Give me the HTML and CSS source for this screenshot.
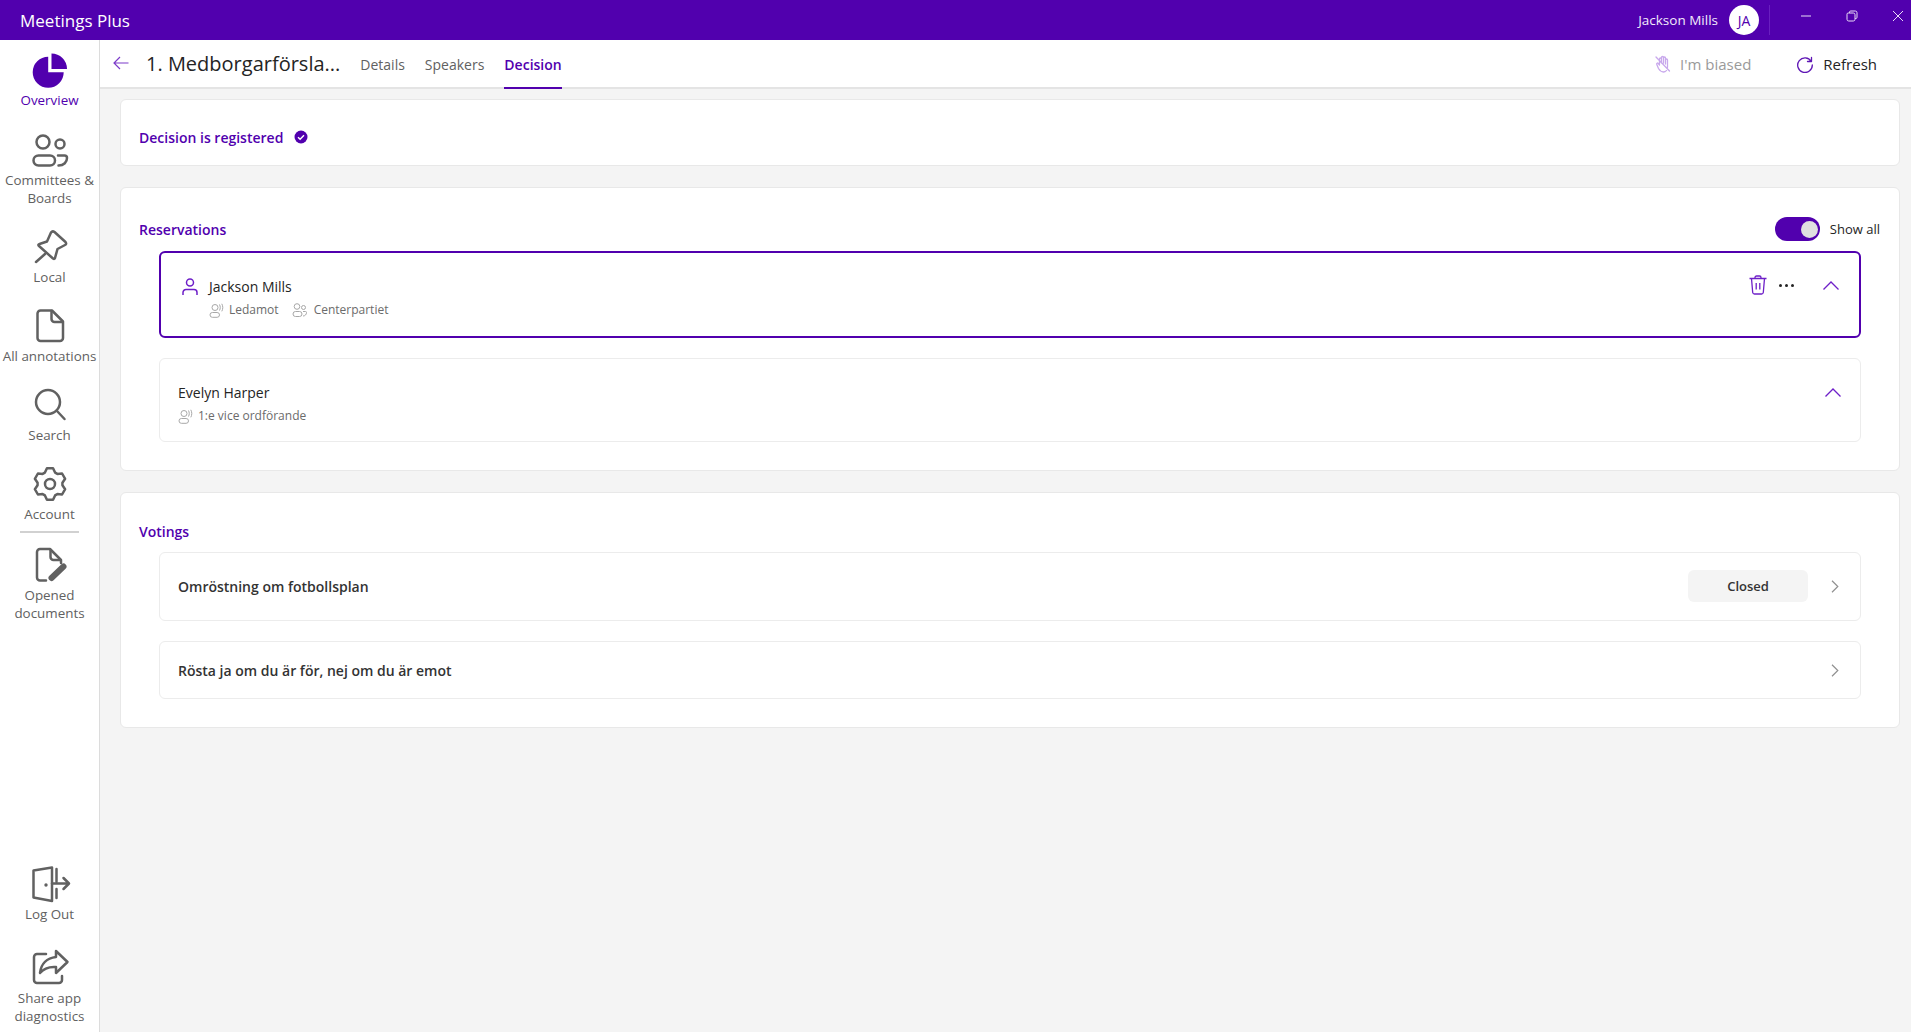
FILE: index.html
```html
<!DOCTYPE html>
<html lang="en">
<head>
<meta charset="utf-8">
<title>Meetings Plus</title>
<link rel="stylesheet" href="styles.css">
</head>
<body>
<div class="app">
  <header class="titlebar">
    <div class="app-name">Meetings Plus</div>
    <div class="title-right">
      <span class="user-name">Jackson Mills</span>
      <span class="avatar">JA</span>
      <span class="title-sep"></span>
      <div class="win-controls">
        <svg class="win-btn" width="12" height="12" viewBox="0 0 12 12"><path d="M1 6h10" class="win-line"/></svg>
        <svg class="win-btn" width="12" height="12" viewBox="0 0 12 12"><path d="M3.500 3V2.200A1.200 1.200 0 0 1 4.700 1h4.600A1.700 1.700 0 0 1 11 2.700v4.600A1.200 1.200 0 0 1 9.800 8.500H9M2.200 3h5.100A1.700 1.700 0 0 1 9 4.700v4.600A1.700 1.700 0 0 1 7.300 11H2.700A1.700 1.700 0 0 1 1 9.300V4.200A1.200 1.200 0 0 1 2.200 3Z" class="win-line"/></svg>
        <svg class="win-btn" width="12" height="12" viewBox="0 0 12 12"><path d="M1 1l10 10M11 1L1 11" class="win-line"/></svg>
      </div>
    </div>
  </header>
  <div class="body">
    <nav class="sidebar">
      <a class="nav-item nav-first active">
        <svg class="nav-icon" viewBox="0 0 36 36"><path class="fill-purple" d="M16.200 4.700V20.200H31.700A15.500 15.500 0 1 1 16.200 4.700Z"/><path class="fill-purple" d="M19.500 1.500A15.500 15.500 0 0 1 35 17H19.500Z"/></svg>
        <span>Overview</span>
      </a>
      <a class="nav-item">
        <svg class="nav-icon" viewBox="0 0 36 36"><circle class="st" cx="11" cy="10" r="6.500"/><circle class="st" cx="28" cy="12" r="4.500"/><rect class="st" x="1.500" y="23.500" width="21.500" height="10" rx="5"/><path class="st" d="M26 23.500h6.500A2.500 2.500 0 0 1 35 26c0 4-3 7.500-8.500 7.500"/></svg>
        <span>Committees &amp; Boards</span>
      </a>
      <a class="nav-item">
        <svg class="nav-icon" viewBox="0 0 36 36"><path class="st" d="M19 3.500Q20.500 1.500 22.500 3L33.500 13Q35 15 33 16L25.500 20 23 29Q22.500 30.500 21 29.500L7 17Q5.500 15.500 7.500 15L15 12.500Z"/><path class="st" d="M4 33l9-8"/></svg>
        <span>Local</span>
      </a>
      <a class="nav-item">
        <svg class="nav-icon" viewBox="0 0 36 36"><path class="st" d="M8.500 2.500H20L31 13.500V30a3 3 0 0 1-3 3H8.500a3 3 0 0 1-3-3V5.500a3 3 0 0 1 3-3Z"/><path class="st" d="M19.500 3v8a3 3 0 0 0 3 3H30"/></svg>
        <span>All annotations</span>
      </a>
      <a class="nav-item">
        <svg class="nav-icon" viewBox="0 0 36 36"><circle class="st" cx="16" cy="15" r="12"/><path class="st" d="M25 24l7.500 8"/></svg>
        <span>Search</span>
      </a>
      <a class="nav-item">
        <svg class="nav-icon" viewBox="0 0 36 36"><path class="st" d="M12.920 6.580L14.950 2.290H21.050L23.080 6.580L25.350 7.890L30.080 7.500L33.130 12.790L30.430 16.690V19.310L33.130 23.210L30.080 28.500L25.350 28.110L23.080 29.420L21.050 33.710H14.950L12.920 29.420L10.650 28.110L5.920 28.500L2.870 23.210L5.570 19.310V16.690L2.870 12.790L5.920 7.500L10.650 7.890Z"/><circle class="st" cx="18" cy="18" r="5"/></svg>
        <span>Account</span>
      </a>
      <div class="nav-divider"></div>
      <a class="nav-item">
        <svg class="nav-icon" viewBox="0 0 36 36"><path class="st" d="M14 33.500H8a3 3 0 0 1-3-3V5a3 3 0 0 1 3-3h10l11 11v3"/><path class="st" d="M18.500 3v7a3 3 0 0 0 3 3H28"/><path class="pencil" d="M19.500 31L31.500 19.500"/></svg>
        <span>Opened documents</span>
      </a>
      <div class="nav-bottom">
        <a class="nav-item">
          <svg class="nav-icon" viewBox="0 0 36 36"><path class="st" d="M1.500 4.500L20 1.500V35L1.500 31.500Z"/><circle class="fill-gray" cx="14" cy="19" r="1.700"/><path class="st" d="M24.500 3v12.500M24.500 23v9M20 17.500h16.500M31.500 12l5.500 5.500-5.500 5.500"/></svg>
          <span>Log Out</span>
        </a>
        <a class="nav-item">
          <svg class="nav-icon" viewBox="0 0 36 36"><path class="st" d="M14 4H5a3 3 0 0 0-3 3v23a3 3 0 0 0 3 3h22a3 3 0 0 0 3-3v-4"/><path class="st" d="M24 1l11.500 11L24 23v-6c-7-.5-12 1-16 6 1-9 7-15 16-16Z"/></svg>
          <span>Share app diagnostics</span>
        </a>
      </div>
    </nav>
    <main class="main">
      <div class="subheader">
        <svg class="back" width="16" height="14" viewBox="0 0 16 14"><path d="M15.500 7H1M7 1L1 7l6 6"/></svg>
        <h1 class="page-title">1. Medborgarförsla...</h1>
        <div class="tabs">
          <a class="tab">Details</a>
          <a class="tab">Speakers</a>
          <a class="tab tab-active">Decision</a>
        </div>
        <div class="actions">
          <a class="action action-disabled">
            <svg width="16" height="18" viewBox="0 0 16 18"><path d="M4.500 9V4a1 1 0 0 1 2 0v4V2.500a1 1 0 0 1 2 0V8 3a1 1 0 0 1 2 0v6 -4a1 1 0 0 1 2 0v7c0 3-2 5-4 5-2.500 0-3.500-1-5-3.500L1.800 9.500c-.6-1 .8-2 1.500-1L4.500 10M1 2l13.500 14"/></svg>
            <span>I'm biased</span>
          </a>
          <a class="action">
            <svg width="18" height="18" viewBox="0 0 18 18"><path d="M15.500 2.500v4h-4M15.200 6.300A7.300 7.300 0 1 0 16.300 10"/></svg>
            <span>Refresh</span>
          </a>
        </div>
      </div>
      <div class="content">
        <section class="card card-decision">
          <h2 class="card-title">Decision is registered</h2>
          <svg class="check" width="14" height="14" viewBox="0 0 14 14"><circle cx="7" cy="7" r="6.500" class="fill-purple"/><path d="M4 7.200l2.100 2L10 5.200" class="check-mark"/></svg>
        </section>
        <section class="card card-reservations">
          <div class="card-head">
            <h2 class="card-title head-title">Reservations</h2>
            <div class="toggle-wrap">
              <span class="toggle"><span class="knob"></span></span>
              <span class="toggle-label">Show all</span>
            </div>
          </div>
          <div class="list">
            <div class="row row-selected">
              <svg class="person" width="16" height="18" viewBox="0 0 16 18"><circle cx="8" cy="4.500" r="3.500"/><path d="M1 17v-2.500A3 3 0 0 1 4 11.500h8a3 3 0 0 1 3 3V17"/></svg>
              <div class="row-text">
                <div class="row-name">Jackson Mills</div>
                <div class="row-meta">
                  <svg class="meta-icon" width="15" height="15" viewBox="0 0 15 15"><circle cx="6" cy="4.500" r="3"/><rect x="1" y="9.500" width="9.500" height="4.800" rx="2.400"/><path d="M10.500 1.500c1 2 1 4 0 6M12.800 .8c1.300 2.500 1.300 5 0 7.500"/></svg>
                  <span>Ledamot</span>
                  <svg class="meta-icon meta-second" width="15" height="15" viewBox="0 0 15 15"><circle cx="5" cy="3.500" r="2.800"/><circle cx="11.500" cy="4.500" r="2"/><rect x="1" y="8.500" width="9" height="5" rx="2.500"/><path d="M11 8.500h2.500a1 1 0 0 1 1 1c0 2-1.500 3.500-3.500 3.500"/></svg>
                  <span>Centerpartiet</span>
                </div>
              </div>
              <div class="row-actions">
                <svg class="trash" width="18" height="20" viewBox="0 0 18 20"><path d="M.5 3.500h17M6 3.500V2.500A1.500 1.500 0 0 1 7.500 1h3A1.500 1.500 0 0 1 12 2.500v1M2.500 3.500l1.200 14a1.800 1.800 0 0 0 1.800 1.500h7a1.800 1.800 0 0 0 1.800-1.500l1.200-14M7.200 8v6.500M10.800 8v6.500"/></svg>
                <span class="dots"><i></i><i></i><i></i></span>
                <svg class="chev-up" width="16" height="9" viewBox="0 0 16 9"><path d="M.5 8.500L8 1l7.500 7.500"/></svg>
              </div>
            </div>
            <div class="row row-plain">
              <div class="row-text">
                <div class="row-name">Evelyn Harper</div>
                <div class="row-meta">
                  <svg class="meta-icon" width="15" height="15" viewBox="0 0 15 15"><circle cx="6" cy="4.500" r="3"/><rect x="1" y="9.500" width="9.500" height="4.800" rx="2.400"/><path d="M10.500 1.500c1 2 1 4 0 6M12.800 .8c1.300 2.500 1.300 5 0 7.500"/></svg>
                  <span>1:e vice ordförande</span>
                </div>
              </div>
              <svg class="chev-up chev-plain" width="16" height="9" viewBox="0 0 16 9"><path d="M.5 8.500L8 1l7.500 7.500"/></svg>
            </div>
          </div>
        </section>
        <section class="card card-votings">
          <h2 class="card-title votings-title">Votings</h2>
          <div class="list">
            <div class="vote vote-tall">
              <span class="vote-name">Omröstning om fotbollsplan</span>
              <span class="pill">Closed</span>
              <svg class="chev-right" width="8" height="13" viewBox="0 0 8 13"><path d="M1 .8l5.800 5.700L1 12.200"/></svg>
            </div>
            <div class="vote vote-short">
              <span class="vote-name">Rösta ja om du är för, nej om du är emot</span>
              <svg class="chev-right" width="8" height="13" viewBox="0 0 8 13"><path d="M1 .8l5.800 5.700L1 12.200"/></svg>
            </div>
          </div>
        </section>
      </div>
    </main>
  </div>
</div>
</body>
</html>
```
FILE: styles.css
```css
* { box-sizing: border-box; }
html, body { margin: 0; height: 100%; overflow: hidden; }
body { font-family: "Open Sans", "Noto Sans", sans-serif; color: #242424; background: #f4f4f4; }
h1, h2 { margin: 0; }
.app { display: flex; flex-direction: column; height: 100vh; }

.titlebar { flex: 0 0 40px; background: #5100ae; color: #fff; display: flex; align-items: center; justify-content: space-between; padding-left: 20px; }
.app-name { font-size: 17px; }
.title-right { display: flex; align-items: center; height: 100%; padding-right: 3px; }
.user-name { font-size: 13.5px; color: #f3ebfb; }
.avatar { width: 30px; height: 30px; border-radius: 50%; background: #fff; color: #5100ae; font-size: 14px; display: flex; align-items: center; justify-content: center; margin-left: 11px; }
.title-sep { width: 1px; height: 30px; background: #6a1fc0; margin-left: 10px; }
.win-controls { display: flex; align-items: center; gap: 34px; padding: 0 4px 8px 0; margin-left: 30px; }
.win-line { fill: none; stroke: #e9dcf7; stroke-width: 1; }

.body { flex: 1; display: flex; min-height: 0; }
.sidebar { flex: 0 0 100px; background: #fff; border-right: 1px solid #dcdcdc; display: flex; flex-direction: column; align-items: center; padding: 12px 0 7px; }
.nav-item { display: flex; flex-direction: column; align-items: center; width: 99px; margin-bottom: 22px; color: #616161; font-size: 13.4px; line-height: 18px; text-align: center; }
.nav-first { margin-bottom: 23px; }
.nav-item span { margin-top: 3px; }
.nav-item.active { color: #5100ae; }
.nav-icon { width: 36px; height: 36px; overflow: visible; flex: none; }
.st { fill: none; stroke: #616161; stroke-width: 2.500; stroke-linecap: round; stroke-linejoin: round; }
.pencil { fill: none; stroke: #616161; stroke-width: 6; stroke-linecap: round; }
.fill-gray { fill: #616161; }
.fill-purple { fill: #5100ae; }
.nav-divider { width: 59px; height: 2px; background: #d1d1d1; margin: -14px 0 14px; }
.nav-bottom { margin-top: auto; display: flex; flex-direction: column; gap: 27px; }
.nav-bottom .nav-item { margin-bottom: 0; }

.main { flex: 1; display: flex; flex-direction: column; min-width: 0; }
.subheader { flex: 0 0 49px; background: #fff; border-bottom: 2px solid #e4e4e4; display: flex; align-items: center; padding-left: 13px; }
.back { fill: none; stroke: #7c3bc9; stroke-width: 1.200; margin-top: -1px; }
.page-title { font-size: 20px; font-weight: 400; margin-left: 17px; line-height: 28px; color: #242424; padding-top: 1px; }
.tabs { display: flex; height: 100%; margin-left: 20px; gap: 20px; }
.tab { font-size: 14px; color: #616161; display: flex; align-items: center; padding-top: 2px; }
.tab-active { color: #5100ae; font-weight: 600; border-bottom: 2px solid #5100ae; margin-bottom: -2px; }
.actions { margin-left: auto; display: flex; align-items: center; gap: 45px; padding-right: 34px; }
.action { display: flex; align-items: center; gap: 9px; font-size: 15px; color: #242424; }
.action svg { fill: none; stroke: #5f17b5; stroke-width: 1.300; stroke-linecap: round; stroke-linejoin: round; }
.action-disabled { color: #9a9a9a; }
.action-disabled svg { stroke: #c8a8ec; }

.content { flex: 1; display: flex; flex-direction: column; gap: 21px; padding: 10px 11px 0 20px; }
.card { background: #fff; border: 1px solid #e8e8e8; border-radius: 6px; }
.card-title { font-size: 14px; font-weight: 600; color: #5100ae; line-height: 20px; }
.card-decision { height: 67px; display: flex; align-items: center; padding: 11px 0 0 18px; gap: 11px; }
.check { margin-top: -2px; }
.check-mark { fill: none; stroke: #fff; stroke-width: 1.400; }
.card-reservations { height: 284px; }
.card-head { display: flex; align-items: center; justify-content: space-between; height: 24px; margin-top: 29px; padding: 0 19px 0 18px; }
.head-title { margin-top: 1px; }
.toggle-wrap { display: flex; align-items: center; gap: 10px; }
.toggle { width: 45px; height: 24px; border-radius: 12px; background: #5100ae; display: flex; align-items: center; justify-content: flex-end; padding-right: 2px; }
.knob { width: 17px; height: 17px; border-radius: 50%; background: #e0e0e0; }
.toggle-label { font-size: 13px; color: #242424; }

.list { display: flex; flex-direction: column; margin: 0 38px; gap: 20px; }
.card-reservations .list { margin-top: 10px; }
.row { display: flex; border-radius: 6px; background: #fff; }
.row-selected { height: 87px; border: 2px solid #5100ae; padding: 24px 20px 0 21px; }
.row-plain { height: 84px; border: 1px solid #ececec; padding: 24px 19px 0 18px; justify-content: space-between; }
.person { fill: none; stroke: #6e1fc8; stroke-width: 1.500; margin: 1px 11px 0 0; flex: none; }
.row-text { display: flex; flex-direction: column; }
.row-name { font-size: 14px; line-height: 20px; color: #242424; }
.row-meta { display: flex; align-items: center; gap: 5px; margin-top: 4px; font-size: 12px; line-height: 18px; color: #6b6b6b; }
.meta-icon { fill: none; stroke: #a8a8a8; stroke-width: 1; flex: none; }
.meta-second { margin: 0 2px 0 8px; }
.row-actions { margin-left: auto; display: flex; align-items: flex-start; margin-top: -2px; }
.trash { fill: none; stroke: #6e1fc8; stroke-width: 1.300; }
.dots { display: flex; gap: 3px; margin: 9px 29px 0 12px; }
.dots i { display: block; width: 3px; height: 3px; border-radius: 50%; background: #242424; }
.chev-up { fill: none; stroke: #6e1fc8; stroke-width: 1.300; margin-top: 6px; }
.chev-plain { margin-top: 5px; }

.card-votings { height: 236px; }
.votings-title { margin: 29px 0 0 18px; }
.card-votings .list { margin-top: 10px; gap: 20px; }
.vote { display: flex; align-items: center; border: 1px solid #ececec; border-radius: 6px; padding: 0 21px 0 18px; }
.vote-tall { height: 69px; }
.vote-short { height: 58px; }
.vote-name { font-size: 14px; font-weight: 600; color: #333; margin-right: auto; }
.pill { width: 120px; height: 32px; border-radius: 6px; background: #f4f4f4; color: #333; font-size: 13px; font-weight: 600; display: flex; align-items: center; justify-content: center; margin: -1px 23px 0 0; }
.chev-right { fill: none; stroke: #909090; stroke-width: 1.200; }
```
